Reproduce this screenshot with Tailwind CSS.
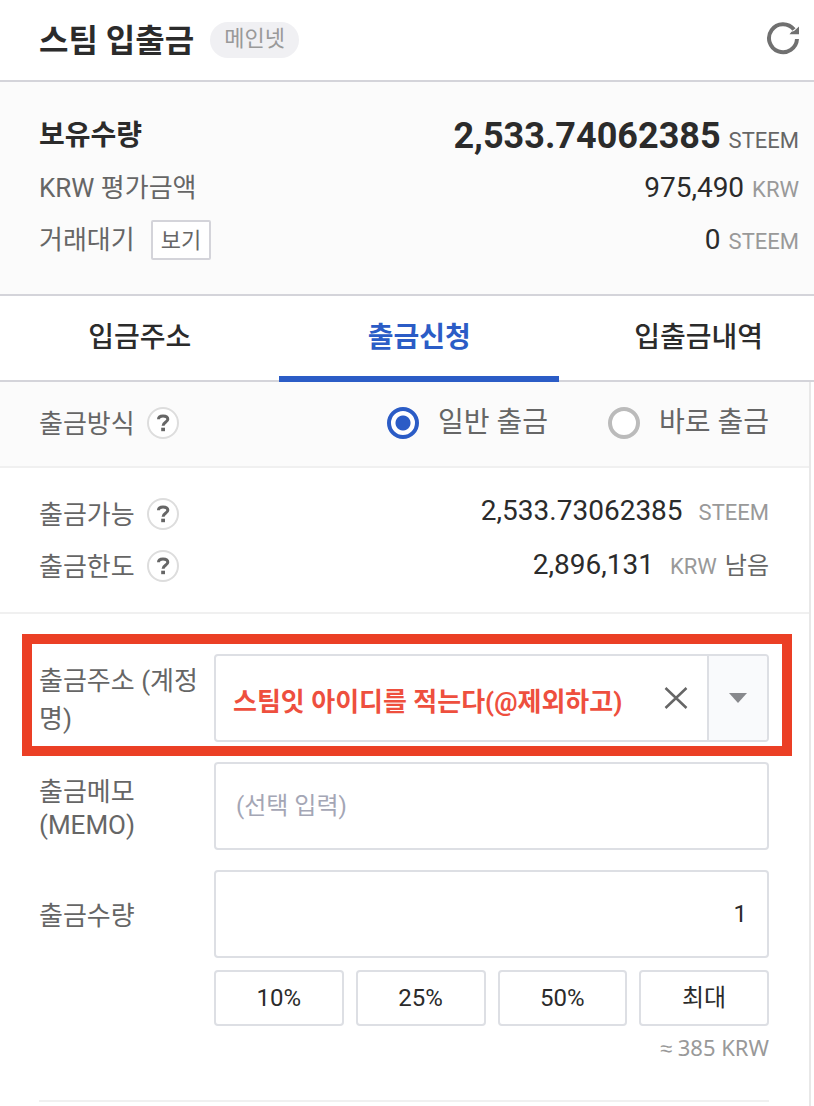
<!DOCTYPE html>
<html lang="ko">
<head>
<meta charset="utf-8">
<meta name="viewport" content="width=device-width, initial-scale=1">
<title>스팀 입출금</title>
<script src="https://cdn.jsdelivr.net/npm/@tailwindcss/browser@4"></script>
</head>
<body class="min-h-screen flex flex-col overflow-x-hidden bg-white font-[Roboto,'Noto_Sans_CJK_KR',sans-serif] text-[26px] leading-9 text-[#666]">
  <header class="flex h-[82px] items-center border-b-2 border-[#d4d4da] pl-[39px] pr-3.5">
    <h1 class="pt-0.5 text-[32px] font-bold leading-10 text-[#2b2b2b]">스팀 입출금</h1>
    <span class="ml-4 flex h-9 items-center rounded-full bg-[#f0f0f3] px-3.5 pb-0.5 text-[22px] leading-8 text-[#999]">메인넷</span>
    <button type="button" aria-label="새로고침" class="ml-auto pb-1">
      <svg class="size-8.5" viewBox="0 0 34 34" fill="none"><path d="M28 8.500A14 14 0 1 0 31 18" stroke="#707070" stroke-width="4"/><path d="M33 5.500v7.800h-9.500l2-2.500 2.500-.8z" fill="#707070"/></svg>
    </button>
  </header>

  <section class="h-[214px] border-b-2 border-[#d4d4da] bg-[#fbfbfb] pl-[39px] pr-[15px] pt-7">
    <dl>
      <div class="flex h-[52px] items-center justify-between">
        <dt class="text-[28px] font-bold text-[#2b2b2b]">보유수량</dt>
        <dd class="flex items-baseline gap-2 pt-0.5 text-[22px]"><strong class="text-4xl font-bold text-[#2b2b2b]">2,533.74062385</strong> STEEM</dd>
      </div>
      <div class="flex h-[52px] items-center justify-between">
        <dt>KRW 평가금액</dt>
        <dd class="flex items-baseline gap-2 pt-0.5 text-[22px] text-[#999]"><span class="text-[28px] text-[#2b2b2b]">975,490</span> KRW</dd>
      </div>
      <div class="flex h-[52px] items-center justify-between">
        <dt class="flex items-center gap-4">거래대기 <button type="button" class="h-10 rounded-xs border-2 border-[#d4d4da] bg-white px-2 pt-0.5 text-[22px] leading-8">보기</button></dt>
        <dd class="flex items-baseline gap-2 pt-0.5 text-[22px] text-[#999]"><span class="text-[28px] text-[#2b2b2b]">0</span> STEEM</dd>
      </div>
    </dl>
  </section>

  <nav class="relative -mb-0.5 h-[86px] overflow-hidden border-b-2 border-[#d4d4da]">
    <div class="grid h-full w-[103%] grid-cols-3 text-center text-[28px] font-medium text-[#2b2b2b]">
      <a href="#deposit" class="pt-6">입금주소</a>
      <a href="#withdraw" class="pt-6 font-bold text-[#2b5cc6]" aria-current="page">출금신청</a>
      <a href="#history" class="pt-6">입출금내역</a>
    </div>
  </nav>
  <div class="relative grid w-[103%] grid-cols-3" aria-hidden="true"><span class="col-start-2 -mt-1 h-1.5 bg-[#2b5cc6]"></span></div>

  <form class="mr-[3px] grow border-r-2 border-[#e8e8e8]">
    <div role="radiogroup" aria-labelledby="method-label" class="flex h-[86px] items-center border-b-2 border-[#f0f0f0] bg-[#fbfbfb] pb-0.5 pl-[39px] pr-10">
      <span id="method-label" class="pt-0.5">출금방식</span>
      <button type="button" aria-label="출금방식 도움말" class="ml-3">
        <svg class="size-8" viewBox="0 0 32 32" fill="none"><circle cx="16" cy="16" r="15" fill="#fff" stroke="#ddd" stroke-width="2"/><path d="M11.500 12.300C11.500 10 13.300 8.900 16 8.900s4.800 1.200 4.800 3.400c0 3-4.700 3.100-4.700 6.400" stroke="#666" stroke-width="3"/><path d="M14.200 20.700h3.800v3.500h-3.800z" fill="#666"/></svg>
      </button>
      <label class="ml-auto flex items-center gap-[19px] text-[28px]"><input type="radio" name="method" checked class="size-8 appearance-none rounded-full border-4 border-[#bbb] bg-white checked:border-[#2b5cc6] checked:bg-[radial-gradient(circle,#2b5cc6_7px,#fff_8px)]">일반 출금</label>
      <label class="ml-15 flex items-center gap-[19px] text-[28px]"><input type="radio" name="method" class="size-8 appearance-none rounded-full border-4 border-[#bbb] bg-white checked:border-[#2b5cc6] checked:bg-[radial-gradient(circle,#2b5cc6_7px,#fff_8px)]">바로 출금</label>
    </div>

    <dl class="h-[146px] border-b-2 border-[#f0f0f0] pl-[39px] pr-10 pt-5">
      <div class="flex h-[52px] items-center justify-between">
        <dt class="flex items-center gap-3"><span class="pt-0.5">출금가능</span>
          <button type="button" aria-label="출금가능 도움말">
            <svg class="size-8" viewBox="0 0 32 32" fill="none"><circle cx="16" cy="16" r="15" fill="#fff" stroke="#ddd" stroke-width="2"/><path d="M11.500 12.300C11.500 10 13.300 8.900 16 8.900s4.800 1.200 4.800 3.400c0 3-4.700 3.100-4.700 6.400" stroke="#666" stroke-width="3"/><path d="M14.200 20.700h3.800v3.500h-3.800z" fill="#666"/></svg>
          </button></dt>
        <dd class="flex items-baseline gap-4 pb-1 text-[22px] text-[#999]"><span class="text-[28px] text-[#2b2b2b]">2,533.73062385</span> STEEM</dd>
      </div>
      <div class="flex h-[52px] items-center justify-between">
        <dt class="flex items-center gap-3"><span class="pt-0.5">출금한도</span>
          <button type="button" aria-label="출금한도 도움말">
            <svg class="size-8" viewBox="0 0 32 32" fill="none"><circle cx="16" cy="16" r="15" fill="#fff" stroke="#ddd" stroke-width="2"/><path d="M11.500 12.300C11.500 10 13.300 8.900 16 8.900s4.800 1.200 4.800 3.400c0 3-4.700 3.100-4.700 6.400" stroke="#666" stroke-width="3"/><path d="M14.200 20.700h3.800v3.500h-3.800z" fill="#666"/></svg>
          </button></dt>
        <dd class="flex items-baseline text-[22px] text-[#999]"><span class="mr-4 text-[28px] text-[#2b2b2b]">2,896,131</span> KRW <span class="ml-2 text-2xl text-[#666]">남음</span></dd>
      </div>
    </dl>

    <div class="ml-[22px] mr-[17px] mt-5 flex items-center border-10 border-[#eb3f25] pb-1 pl-[7px] pr-[13px] pt-2.5">
      <label for="address" class="w-[175px] shrink-0 pt-1 leading-[38px]">출금주소 (계정<br>명)</label>
      <div class="flex h-22 min-w-0 grow overflow-hidden rounded-sm border-2 border-[#dddfe4]">
        <input id="address" type="text" value="스팀잇 아이디를 적는다(@제외하고)" class="min-w-0 grow pl-[17px] pt-2 font-bold text-[#ee4f3e] outline-none">
        <button type="button" aria-label="지우기" class="pl-5 pr-[19px]">
          <svg class="size-6" viewBox="0 0 24 24" fill="none"><path d="M1.500 2l21 20M22.500 2l-21 20" stroke="#666" stroke-width="2.500"/></svg>
        </button>
        <button type="button" aria-label="주소 목록" class="flex w-15 items-center justify-center border-l-2 border-[#dddfe4] bg-[#f9fafc]">
          <svg class="h-2.5 w-[18px]" viewBox="0 0 18 10"><path d="M0 0h18L9 10z" fill="#88898d"/></svg>
        </button>
      </div>
    </div>

    <div class="ml-[39px] mr-10 mt-1.5 flex items-center">
      <label for="memo" class="w-[175px] shrink-0 pt-1.5 leading-[33px]">출금메모<br>(MEMO)</label>
      <input id="memo" type="text" placeholder="(선택 입력)" class="h-22 min-w-0 grow rounded-sm border-2 border-[#dddfe4] px-5 text-2xl placeholder:text-[#a4a6b5]">
    </div>

    <div class="ml-[39px] mr-10 mt-5 flex items-center">
      <label for="amount" class="w-[175px] shrink-0 pt-1">출금수량</label>
      <input id="amount" type="text" inputmode="decimal" value="1" class="h-22 min-w-0 grow rounded-sm border-2 border-[#dddfe4] px-5 text-right text-2xl text-[#2b2b2b]">
    </div>
    <div class="ml-[214px] mr-10 mt-3 grid grid-cols-4 gap-3 text-2xl text-[#2b2b2b]">
      <button type="button" class="h-14 rounded-sm border-2 border-[#dddfe4]">10%</button>
      <button type="button" class="h-14 rounded-sm border-2 border-[#dddfe4]">25%</button>
      <button type="button" class="h-14 rounded-sm border-2 border-[#dddfe4]">50%</button>
      <button type="button" class="h-14 rounded-sm border-2 border-[#dddfe4]">최대</button>
    </div>
    <p class="mr-10 mt-[3px] text-right font-['Noto_Sans',sans-serif] text-[22px] text-[#999]">≈ 385 KRW</p>
    <hr class="ml-[39px] mr-10 mt-[35px] border-t-2 border-[#f0f0f0]">
  </form>
</body>
</html>
